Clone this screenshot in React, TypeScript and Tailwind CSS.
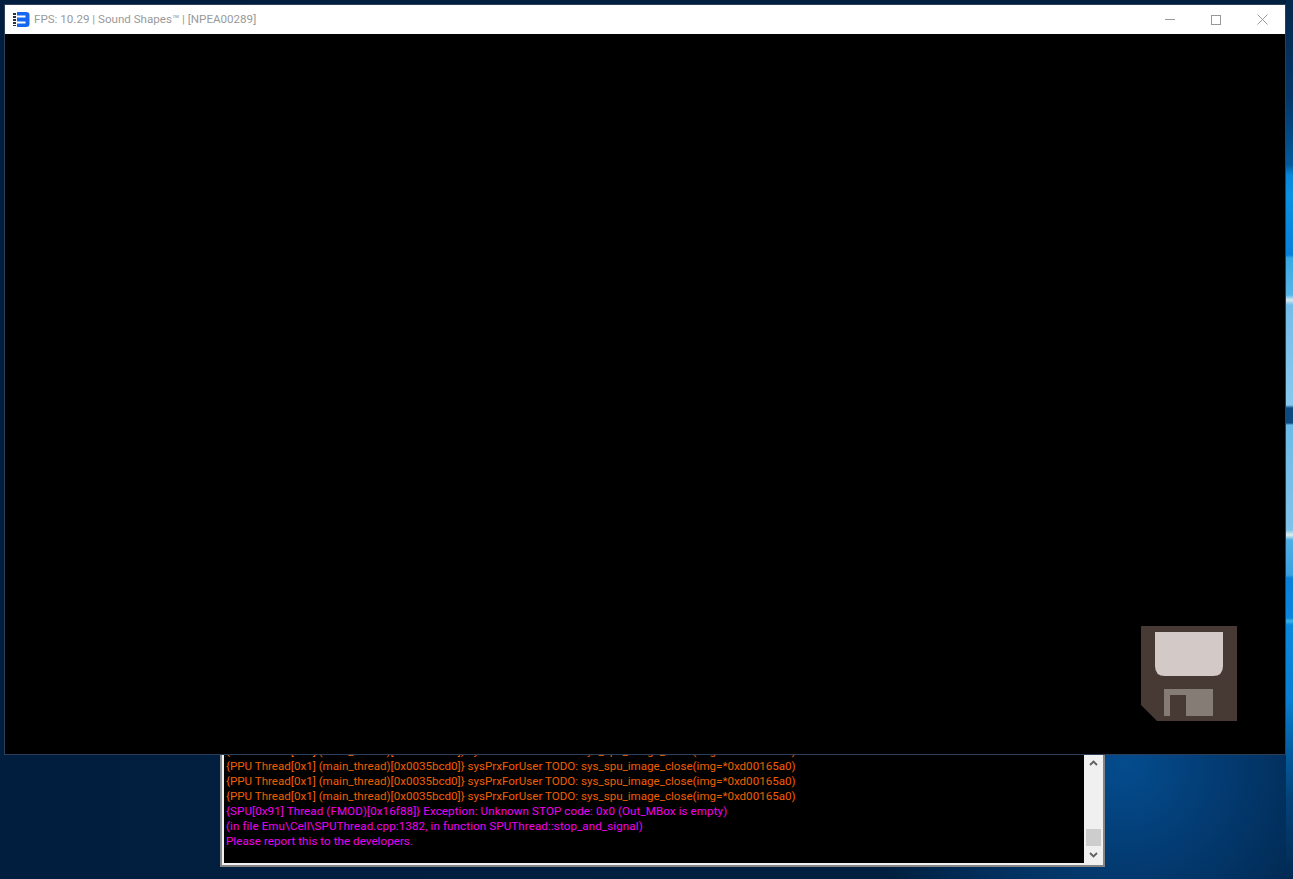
const ppuLine = "{PPU Thread[0x1] (main_thread)[0x0035bcd0]} sysPrxForUser TODO: sys_spu_image_close(img=*0xd00165a0)";

function GameIcon() {
  return (
    <svg width="17" height="15" viewBox="0 0 17 15" className="shrink-0">
      <path d="M0 1h3v2H0zM0 4h3v2H0zM0 7h3v2H0zM0 10h3v2H0zM0 13h3v1H0z" fill="#2b3240" />
      <path d="M4 0h9q3.500 0 3.500 3v9q0 3-3.500 3H4z" fill="#1668f0" />
      <path d="M4 3.500h8.500v2H4zM4 9.500h8.500v2H4z" fill="#ffffff" />
    </svg>
  );
}

function TitleBar() {
  return (
    <div className="flex h-[29px] items-center bg-white pl-2">
      <GameIcon />
      <span className="ml-1 font-['Roboto',sans-serif] text-[11.6px] text-[#9a9a9a]">
        FPS: 10.29 | Sound Shapes™ | [NPEA00289]
      </span>
      <div className="ml-auto flex items-center">
        <div className="flex h-[29px] w-[46px] items-center justify-center">
          <div className="h-px w-[10px] bg-[#999999]" />
        </div>
        <div className="flex h-[29px] w-[46px] items-center justify-center">
          <div className="size-[10px] border border-[#999999]" />
        </div>
        <div className="flex h-[29px] w-[46px] items-center justify-center">
          <svg width="11" height="11" viewBox="0 0 11 11">
            <path d="M0.500 0.500l10 10M10.500 0.500l-10 10" stroke="#999999" fill="none" />
          </svg>
        </div>
      </div>
    </div>
  );
}

function Floppy() {
  return (
    <svg width="96" height="95" viewBox="0 0 96 95" className="absolute left-[1136px] top-[621px]">
      <path d="M0 0h96v95H16L0 79z" fill="#473933" />
      <path d="M14 6h68v34q0 10-10 10H24q-10 0-10-10z" fill="#d3cac7" />
      <path d="M23 63h49v27H23z" fill="#857d75" />
      <path d="M29 69h16v21H29z" fill="#473933" />
    </svg>
  );
}

function LogWindow() {
  return (
    <div className="absolute left-[220px] top-[700px] flex h-[167px] w-[885px] border-2 border-[#858585] bg-[#f0f0f0] p-[2px] pr-px">
      <div className="flex flex-1 flex-col justify-end overflow-hidden bg-black pb-[14px] pl-[2px] font-['Roboto',sans-serif] text-[11.6px] leading-[15px]">
        <p className="text-[#f05f00]">{ppuLine}</p>
        <p className="text-[#f05f00]">{ppuLine}</p>
        <p className="text-[#f05f00]">{ppuLine}</p>
        <p className="text-[#f05f00]">{ppuLine}</p>
        <p className="tracking-[0.09px] text-[#f000f0]">{"{SPU[0x91] Thread (FMOD)[0x16f88]} Exception: Unknown STOP code: 0x0 (Out_MBox is empty)"}</p>
        <p className="tracking-[0.1px] text-[#f000f0]">{"(in file Emu\\Cell\\SPUThread.cpp:1382, in function SPUThread::stop_and_signal)"}</p>
        <p className="tracking-[0.05px] text-[#f000f0]">Please report this to the developers.</p>
      </div>
      <div className="flex w-[18px] flex-col items-center justify-end bg-[#f0f0f0]">
        <svg width="9" height="6" viewBox="0 0 9 6" className="mb-[63px]">
          <path d="M1 5l3.500-3.500L8 5" fill="none" stroke="#606060" strokeWidth="1.800" />
        </svg>
        <div className="h-[17px] w-[15px] bg-[#cdcdcd]" />
        <svg width="9" height="6" viewBox="0 0 9 6" className="mt-[6px] mb-[5px]">
          <path d="M1 1l3.500 3.500L8 1" fill="none" stroke="#606060" strokeWidth="1.800" />
        </svg>
      </div>
    </div>
  );
}

export default function App() {
  return (
    <div className="relative h-[879px] w-[1293px] overflow-hidden bg-[radial-gradient(circle_260px_at_1125px_765px,#044c8e_0%,#033a70_40%,#012b55_75%,transparent_100%),linear-gradient(90deg,#011e3e,#012040)] bg-no-repeat [background-size:100%_100%]">
      <div className="absolute right-0 top-0 h-full w-[7px] bg-[linear-gradient(180deg,#06284c_0px,#04386a_100px,#045a9c_165px,#0a86d8_175px,#0c90e0_195px,#0880da_255px,#38a8e4_258px,#58b4e8_295px,#d8e8ee_300px,#74bce8_305px,#88c8ee_405px,#0d4a80_408px,#0d4a80_423px,#6cbae8_425px,#80c2e8_530px,#e0eef0_535px,#50aee4_540px,#3ca0e0_575px,#0a80d8_578px,#0a86dc_618px,#40b0e8_621px,#0a88dc_625px,#0a7ed0_700px,#045a9c_755px,#034278_800px,#012a52_879px)]" />
      <LogWindow />
      <div className="absolute left-[4px] top-[4px] h-[751px] w-[1282px] border border-[#2c3e58] bg-black">
        <TitleBar />
        <Floppy />
      </div>
    </div>
  );
}
